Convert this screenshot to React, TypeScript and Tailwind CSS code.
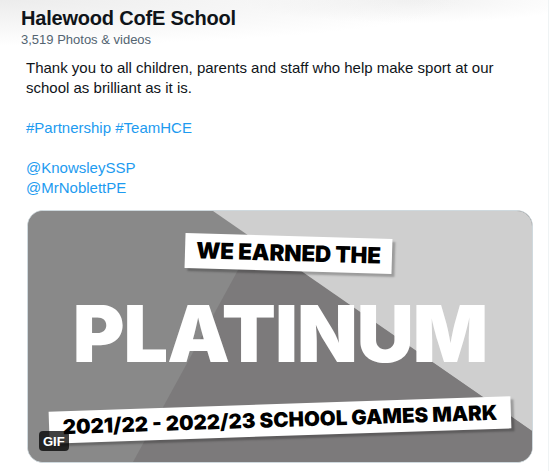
import React from "react";

export default function App() {
  return (
    <div className="relative w-[549px] h-[471px] bg-white border-r border-[#eff3f4] overflow-hidden" style={{ fontFamily: '"Liberation Sans", Arial, sans-serif' }}>
      {/* header */}
      <div className="pl-[21px] pt-[6px] h-[54px] bg-[radial-gradient(ellipse_at_0%_0%,#ececec_0%,rgba(255,255,255,0)_60%),radial-gradient(ellipse_at_75%_0%,#f1f1f1_0%,rgba(255,255,255,0)_30%)]">
        <div className="text-[20px] leading-6 font-bold text-[#0f1419] tracking-[-0.2px]">Halewood CofE School</div>
        <div className="mt-[2px] text-[13px] leading-4 text-[#536471]">3,519 Photos &amp; videos</div>
      </div>

      {/* tweet */}
      <div className="pl-[26px] pr-4 pt-[4px]">
        <div className="text-[15px] leading-5 text-[#0f1419]">
          <p>Thank you to all children, parents and staff who help make sport at our school as brilliant as it is.</p>
          <p className="mt-5 text-[#1d9bf0]">#Partnership #TeamHCE</p>
          <p className="mt-5 text-[#1d9bf0]">@KnowsleySSP</p>
          <p className="text-[#1d9bf0]">@MrNoblettPE</p>
        </div>

        <div className="relative mt-3 ml-px w-[506px] h-[253px] rounded-2xl border border-[#cfd9de] overflow-hidden bg-[#898989]">
          <svg className="absolute inset-0 w-full h-full" viewBox="0 0 504 251" preserveAspectRatio="none">
            <rect x="0" y="0" width="504" height="251" fill="#898989" />
            <polygon points="185,0 504,0 504,220" fill="#cfcfcf" />
            <polygon points="227,28 504,220 504,251 105,251" fill="#7c7a7b" />
          </svg>

          <div className="absolute left-[157px] top-[25px] w-[207px] h-[35px] bg-white rotate-[1.65deg] shadow-[3px_3px_2px_rgba(0,0,0,0.25)] flex items-center justify-center">
            <span className="text-[22.5px] leading-none font-black text-black tracking-[-0.2px]" style={{ fontFamily: 'Inter, Lato, sans-serif' }}>WE EARNED THE</span>
          </div>

          <div className="absolute left-0 right-0 top-[83px] flex justify-center">
            <span className="text-[79px] leading-none font-black text-white tracking-[-1px]" style={{ fontFamily: 'Inter, Lato, sans-serif' }}>PLATINUM</span>
          </div>

          <div className="absolute left-[21px] top-[193px] w-[462px] h-[32px] bg-white -rotate-[1.9deg] shadow-[3px_3px_2px_rgba(0,0,0,0.25)] flex items-center justify-center">
            <span className="text-[20.5px] leading-none font-black text-black" style={{ fontFamily: 'Inter, Lato, sans-serif' }}>2021/22 - 2022/23 SCHOOL GAMES MARK</span>
          </div>

          <div className="absolute left-[11px] bottom-[11px] h-5 px-[4px] rounded-[4px] bg-black/75 flex items-center">
            <span className="text-[13px] leading-none font-bold text-white">GIF</span>
          </div>
        </div>
      </div>
    </div>
  );
}
